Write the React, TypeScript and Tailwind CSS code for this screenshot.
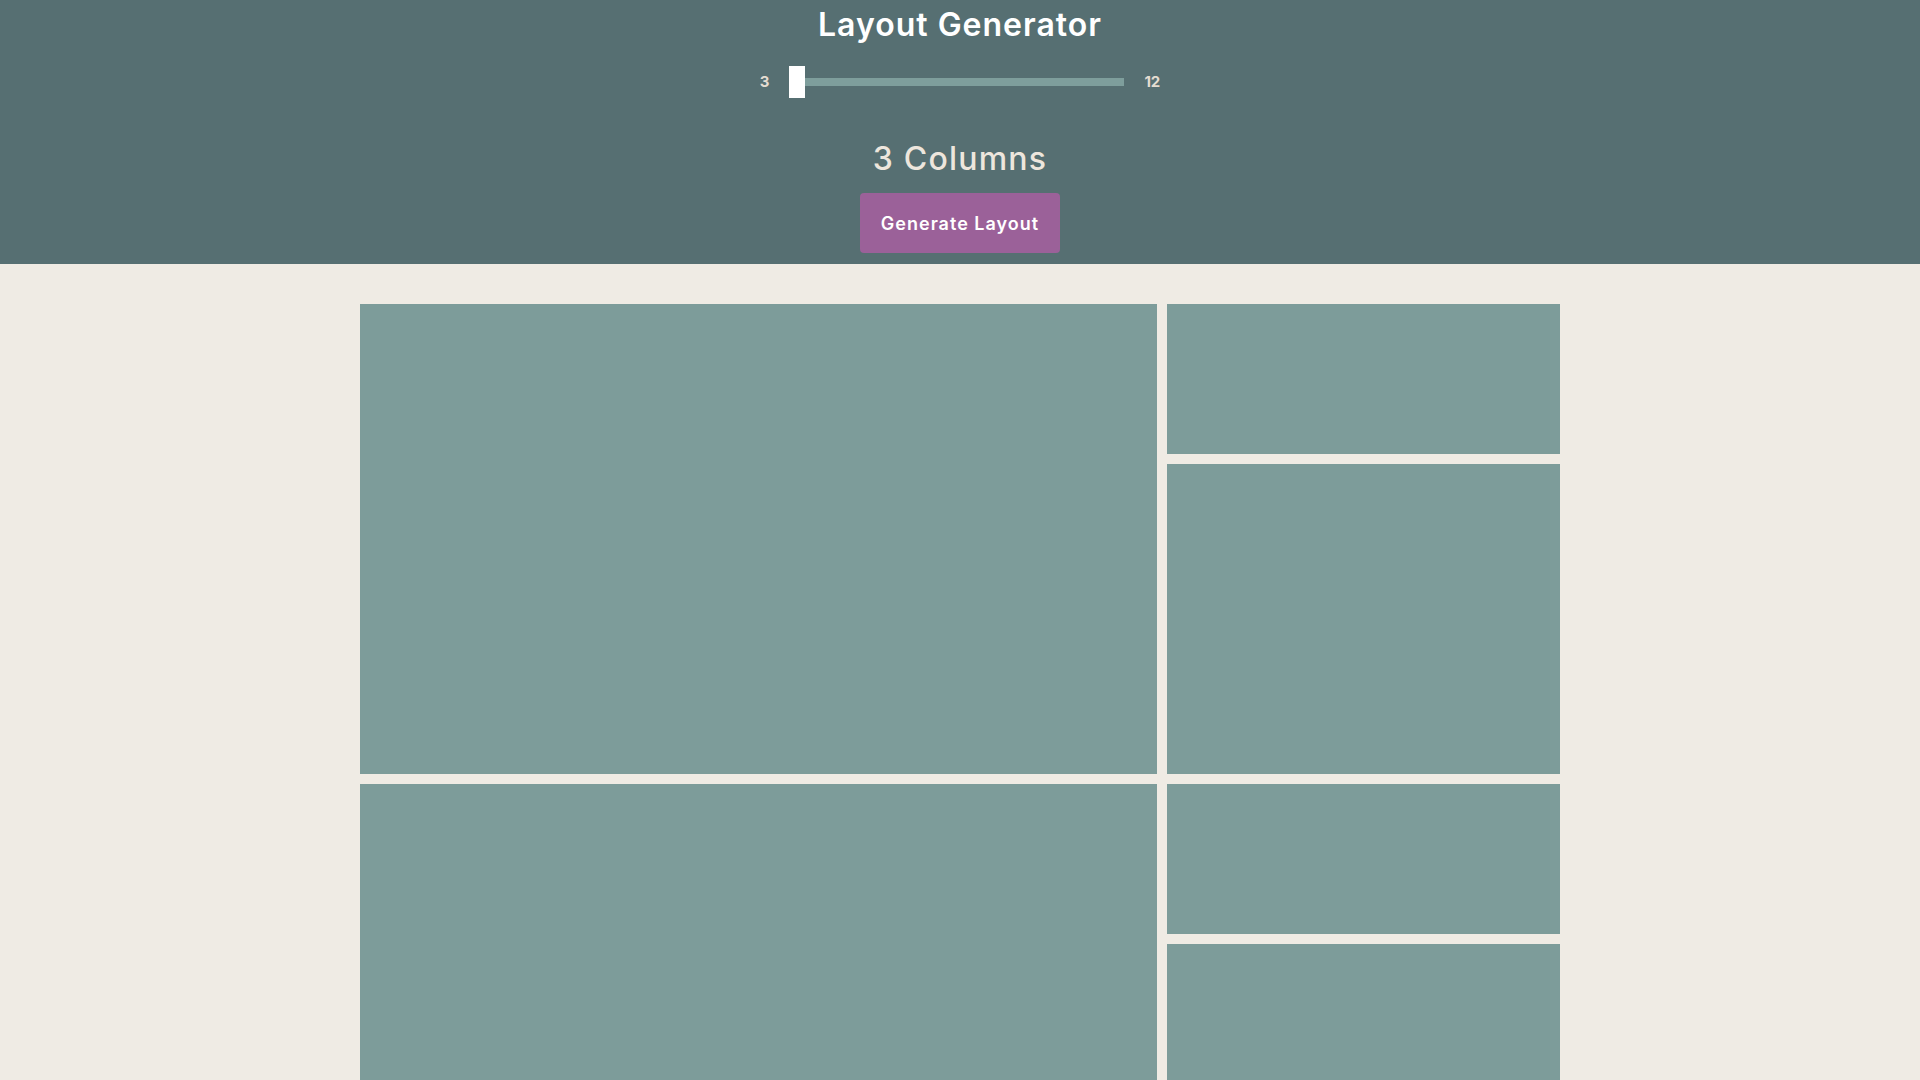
import React from "react";

const tiles: string[] = [
  "col-span-2 row-span-3",
  "",
  "row-span-2",
  "col-span-2 row-span-3",
  "",
  "row-span-2",
  "col-span-2 row-span-3",
  "",
  "row-span-2",
];

export default function App() {
  return (
    <div className="min-h-screen bg-[#efebe4]" style={{ fontFamily: "Inter, 'Open Sans', sans-serif" }}>
      <header className="bg-[#566f72] flex flex-col items-center pb-[11px]">
        <h1 className="m-0 pt-[1px] text-[32px] leading-[48px] font-semibold text-white tracking-[1px]">Layout Generator</h1>
        <div className="mt-[17px] flex items-center gap-5 h-8">
          <span className="text-[15px] font-bold text-[#e4dcd1]">3</span>
          <div className="relative w-[335px] h-2 bg-[#7e9e9c]">
            <div className="absolute left-0 top-1/2 -translate-y-1/2 w-4 h-8 bg-white" />
          </div>
          <span className="text-[15px] font-bold text-[#e4dcd1]">12</span>
        </div>
        <div className="mt-[37px] text-[32px] leading-[48px] font-medium text-[#ede6dd] tracking-[1.2px]">3 Columns</div>
        <button className="mt-[10px] w-[200px] h-[60px] pt-[2px] rounded bg-[#9b6199] text-white text-lg font-semibold tracking-[1px]">
          Generate Layout
        </button>
      </header>
      <main className="pt-10 pb-10">
        <div className="mx-auto w-[1200px] grid grid-cols-3 gap-[10px] auto-rows-[150px]">
          {tiles.map((c, i) => (
            <div key={i} className={`bg-[#7d9c9a] ${c}`} />
          ))}
        </div>
      </main>
    </div>
  );
}
